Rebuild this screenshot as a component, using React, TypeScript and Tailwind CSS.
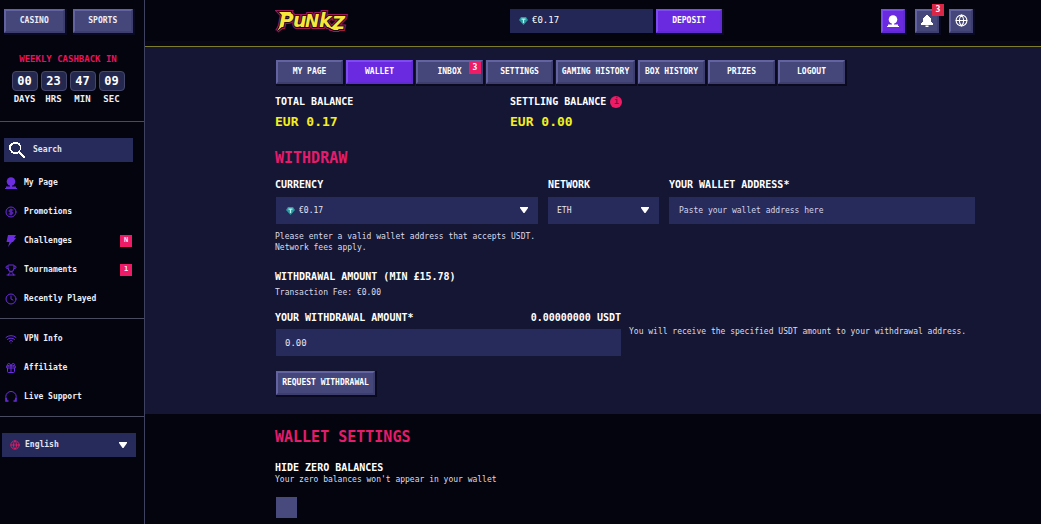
import React from "react";
import { CircleDollarSign, Clock, Gift, Globe, Trophy, Wifi } from "lucide-react";

const display = "font-bold";
const bevel =
  "border-2 border-t-[#6263a0] border-l-[#6263a0] border-r-[#3d3e6e] border-b-[#3d3e6e] bg-[#45477a] shadow-[1px_1px_0_1px_#090920]";
const bevelPurple =
  "border-2 border-t-[#7d4cf0] border-l-[#7d4cf0] border-r-[#5f2bd0] border-b-[#5f2bd0] bg-[#6a2be0] shadow-[1px_1px_0_1px_#090920]";
const field = "block w-full bg-[#272b5c] text-[#e4e4f2] outline-none appearance-none rounded-none";

const UserIcon = ({ className }: { className?: string }) => (
  <svg viewBox="0 0 12 12" className={className} fill="currentColor">
    <circle cx="6" cy="4.500" r="4.300" />
    <path d="M5 8h2v1.500h4V11h1v1H0v-1h1V9.500h4z" />
  </svg>
);

const BoltIcon = ({ className }: { className?: string }) => (
  <svg viewBox="0 0 12 12" className={className} fill="currentColor">
    <path d="M3 0h8L9 3h2L8 7H7l-4 5 1.500-5H1.500z" />
  </svg>
);

const HeadsetIcon = ({ className }: { className?: string }) => (
  <svg viewBox="0 0 12 12" className={className} fill="none" stroke="currentColor">
    <path d="M2 9A5.200 5.200 0 1 1 10 9" />
    <path d="M1 7v3h2.500M11 7v3H8.500" strokeWidth="1.500" />
  </svg>
);

const SearchIcon = ({ className }: { className?: string }) => (
  <svg viewBox="0 0 16 16" className={className} fill="currentColor">
    <path d="M4 0h5v1h2v2h1v5h-1v2h1v1h1v1h1v1h1v1h1v2h-2v-1h-1v-1h-1v-1h-1v-1h-1v-1H9v1H4v-1H2V9H1V8H0V3h1V2h1V1h2zM4 2v1H3v1H2v4h1v1h1v1h5V9h1V8h1V4h-1V3H9V2z" />
  </svg>
);

const BellIcon = ({ className }: { className?: string }) => (
  <svg viewBox="0 0 12 12" className={className} fill="currentColor">
    <path d="M5 0h2v1h1v1h1v1h1v4h1v1h1v2H0V8h1V7h1V3h1V2h1V1h1zM4.500 10.500h3V12h-3z" />
  </svg>
);

const Gem = ({ className }: { className?: string }) => (
  <svg viewBox="0 0 9 8" className={className}>
    <path d="M2 0h5l2 3-4.500 5L0 3z" fill="#2b9aa0" />
    <path d="M2.500 1.500h4v1.200H5.100V6H3.900V2.700H2.500z" fill="#b9f5f0" />
  </svg>
);

const Caret = ({ className }: { className?: string }) => (
  <svg viewBox="0 0 8 6" className={className} fill="#fff">
    <path d="M0 0h8v1L4.500 6h-1L0 1z" />
  </svg>
);

const Logo = () => (
  <svg viewBox="0 0 76 26" className="h-[26px] w-[76px]" role="img" aria-label="Punkz">
    <g
      fontFamily="'DejaVu Sans', sans-serif"
      fontStyle="italic"
      fontWeight="700"
      strokeLinejoin="miter"
      strokeMiterlimit="3"
    >
      {[
        { stroke: "#9c1a5c", width: 4 },
        { stroke: "#1c0618", width: 2 },
        { stroke: "none", width: 0 },
      ].map((layer) => (
        <g key={layer.width} stroke={layer.stroke} strokeWidth={layer.width} fill="#f7e63c">
          <path d="M4 4h12l-1 3H7zM7 15l-5 8 6-5 1-3zM53 19h12l-2 3h-4z" />
          <text y="19">
            <tspan x="4" fontSize="20">P</tspan>
            <tspan x="18" fontSize="19">u</tspan>
            <tspan x="30" fontSize="17">N</tspan>
            <tspan x="44" fontSize="19">k</tspan>
            <tspan x="57" y="21" fontSize="18">Z</tspan>
          </text>
        </g>
      ))}
    </g>
  </svg>
);

const timer = [
  { value: "00", label: "DAYS" },
  { value: "23", label: "HRS" },
  { value: "47", label: "MIN" },
  { value: "09", label: "SEC" },
];

const mainLinks = [
  { label: "My Page", icon: UserIcon },
  { label: "Promotions", icon: CircleDollarSign },
  { label: "Challenges", icon: BoltIcon, badge: "N" },
  { label: "Tournaments", icon: Trophy, badge: "1" },
  { label: "Recently Played", icon: Clock },
];

const helpLinks = [
  { label: "VPN Info", icon: Wifi },
  { label: "Affiliate", icon: Gift },
  { label: "Live Support", icon: HeadsetIcon },
];

const tabs = [
  { label: "MY PAGE" },
  { label: "WALLET", active: true },
  { label: "INBOX", badge: "3" },
  { label: "SETTINGS" },
  { label: "GAMING HISTORY", wide: true },
  { label: "BOX HISTORY" },
  { label: "PRIZES" },
  { label: "LOGOUT" },
];

type NavItem = { label: string; icon: React.ElementType; badge?: string };

const NavList = ({ items }: { items: NavItem[] }) => (
  <ul>
    {items.map(({ label, icon: Icon, badge }) => (
      <li key={label}>
        <a href="#" className="flex h-[29px] items-center pl-[5px] pr-3 text-[8px] font-bold">
          <Icon className="h-3 w-3 text-[#6c2de0]" />
          <span className="ml-[7px] flex-1">{label}</span>
          {badge && (
            <span className="flex h-3 w-3 items-center justify-center bg-[#ee1c67] text-[7px]">
              {badge}
            </span>
          )}
        </a>
      </li>
    ))}
  </ul>
);

const Sidebar = () => (
  <aside className="w-[145px] shrink-0 border-r border-[#3f4160] text-[#eeeef6]">
    <div className="flex gap-2 pt-[9px] pl-1 pr-[11px]">
      <button className={`${display} ${bevel} h-6 flex-1 text-[8px]`}>CASINO</button>
      <button className={`${display} ${bevel} h-6 flex-1 text-[8px]`}>SPORTS</button>
    </div>
    <div className="border-b border-[#4a4b5e] pt-5 pr-2 pb-4 text-center">
      <p className={`${display} text-[9px] leading-3 text-[#e8135f]`}>WEEKLY CASHBACK IN</p>
      <div className="mt-[6px] flex justify-center gap-[3px]">
        {timer.map((part) => (
          <div key={part.label} className="w-[26px]">
            <div className={`${display} h-5 rounded-sm border border-[#45476c] bg-[#25284e] text-[12px] leading-[18px] text-white`}>
              {part.value}
            </div>
            <p className={`${display} mt-[2px] text-[9px] leading-3`}>{part.label}</p>
          </div>
        ))}
      </div>
    </div>
    <div className="border-b border-[#4a4b5e] pt-4 pb-[5px]">
      <label className="mb-[6px] ml-1 mr-[11px] flex h-6 items-center bg-[#272b5c] pl-[5px]">
        <SearchIcon className="h-4 w-4 shrink-0 text-white" />
        <input
          type="search"
          aria-label="Search"
          placeholder="Search"
          className="ml-2 w-full text-[8px] font-bold outline-none placeholder:text-[#e4e4f2]"
        />
      </label>
      <NavList items={mainLinks} />
    </div>
    <div className="border-b border-[#4a4b5e] py-[5px]">
      <NavList items={helpLinks} />
    </div>
    <div className="relative mt-4 ml-[2px] mr-2">
      <Globe className="absolute top-[7px] left-2 h-[10px] w-[10px] text-[#ee1c67]" />
      <select aria-label="Language" className={`${field} h-6 pl-[23px] text-[8px] font-bold`}>
        <option>English</option>
      </select>
      <Caret className="pointer-events-none absolute top-[9px] right-[9px] h-[6px] w-2" />
    </div>
  </aside>
);

const Header = () => (
  <header className="border-b border-[#7d7d2c]">
    <div className="flex h-[46px] items-center justify-between border-b-[5px] border-[#080716] pr-[68px] pl-[130px]">
      <a href="#">
        <Logo />
      </a>
      <div className="flex items-center gap-[3px]">
        <div className="flex h-6 w-[143px] items-center gap-1 bg-[#232755] pl-[9px] text-[9px] text-white">
          <Gem className="h-2 w-[9px]" />
          <span>€0.17</span>
        </div>
        <button className={`${display} ${bevelPurple} h-6 w-[66px] text-[8px] text-white`}>DEPOSIT</button>
      </div>
      <div className="flex gap-[10px] text-white">
        <button aria-label="My page" className={`${bevelPurple} flex h-6 w-6 items-center justify-center`}>
          <UserIcon className="h-3 w-3" />
        </button>
        <button aria-label="Notifications" className={`${bevel} relative flex h-6 w-6 items-center justify-center`}>
          <BellIcon className="h-3 w-3" />
          <span className={`${display} absolute -top-[7px] -right-[7px] flex h-3 w-3 items-center justify-center bg-[#da2747] text-[8px]`}>
            3
          </span>
        </button>
        <button aria-label="Language" className={`${bevel} flex h-6 w-6 items-center justify-center`}>
          <Globe className="h-[13px] w-[13px]" />
        </button>
      </div>
    </div>
  </header>
);

const Tabs = () => (
  <nav className="flex gap-[3px] pl-px">
    {tabs.map((tab) => (
      <button
        key={tab.label}
        className={`${display} ${tab.active ? bevelPurple : bevel} ${
          tab.wide ? "w-[79px]" : "w-[67px]"
        } relative h-6 text-[8px] whitespace-nowrap text-white`}
      >
        {tab.label}
        {tab.badge && (
          <span className="absolute top-0 right-0 flex h-3 w-3 items-center justify-center bg-[#ee1c67]">
            {tab.badge}
          </span>
        )}
      </button>
    ))}
  </nav>
);

const label = `${display} block text-[10px] leading-3 text-white`;
const heading = `${display} text-[15px] leading-5 text-[#e51c6b]`;
const amount = `${display} mt-[6px] text-[13px] leading-4 text-[#f5ee1e]`;

const Withdraw = () => (
  <section className="bg-[#151633] pt-[13px] pr-[66px] pb-[19px] pl-[130px]">
    <Tabs />
    <div className="mt-3 flex">
      <div className="w-[235px]">
        <p className={label}>TOTAL BALANCE</p>
        <p className={amount}>EUR 0.17</p>
      </div>
      <div>
        <div className="flex items-center gap-1">
          <p className={label}>SETTLING BALANCE</p>
          <span className={`${display} flex h-3 w-3 items-center justify-center rounded-full bg-[#ee1c67] text-[8px] text-[#7a0f3c]`}>
            i
          </span>
        </div>
        <p className={amount}>EUR 0.00</p>
      </div>
    </div>

    <h2 className={`${heading} mt-[18px]`}>WITHDRAW</h2>
    <form>
      <div className="mt-[11px] grid grid-cols-[263fr_111fr_306fr] gap-[10px]">
        <div>
          <label htmlFor="currency" className={label}>CURRENCY</label>
          <div className="relative mt-[6px] ml-px">
            <Gem className="absolute top-[10px] left-[10px] h-2 w-[9px]" />
            <select id="currency" className={`${field} h-[27px] pl-[23px] text-[8px]`}>
              <option>€0.17</option>
            </select>
            <Caret className="pointer-events-none absolute top-[10px] right-[10px] h-[6px] w-2" />
          </div>
        </div>
        <div>
          <label htmlFor="network" className={label}>NETWORK</label>
          <div className="relative mt-[6px]">
            <select id="network" className={`${field} h-[27px] pl-[9px] text-[8px]`}>
              <option>ETH</option>
            </select>
            <Caret className="pointer-events-none absolute top-[10px] right-[10px] h-[6px] w-2" />
          </div>
        </div>
        <div>
          <label htmlFor="address" className={label}>YOUR WALLET ADDRESS*</label>
          <input
            id="address"
            placeholder="Paste your wallet address here"
            className={`${field} mt-[6px] h-[27px] px-[10px] text-[8px] placeholder:text-[#d4d5ea]`}
          />
        </div>
      </div>
      <p className="mt-[7px] text-[8px] leading-[11px]">
        Please enter a valid wallet address that accepts USDT.
        <br />
        Network fees apply.
      </p>

      <h3 className={`${label} mt-[18px]`}>WITHDRAWAL AMOUNT (MIN £15.78)</h3>
      <p className="mt-1 text-[8px] leading-3">Transaction Fee: €0.00</p>

      <div className="mt-[13px] grid grid-cols-2 gap-2">
        <div>
          <div className="flex justify-between">
            <label htmlFor="amount" className={label}>YOUR WITHDRAWAL AMOUNT*</label>
            <span className={label}>0.00000000 USDT</span>
          </div>
          <div className="mt-[5px] pl-px">
            <input
              id="amount"
              defaultValue="0.00"
              className={`${field} h-[27px] px-[9px] text-[9px]`}
            />
          </div>
        </div>
        <p className="self-center pb-1 text-[8px] leading-3 whitespace-nowrap">
          You will receive the specified USDT amount to your withdrawal address.
        </p>
      </div>
      <button
        type="button"
        className={`${display} ${bevel} mt-[15px] ml-px h-6 w-[99px] text-[8px] whitespace-nowrap text-white`}
      >
        REQUEST WITHDRAWAL
      </button>
    </form>
  </section>
);

const WalletSettings = () => (
  <section className="pt-[13px] pr-[66px] pl-[130px]">
    <h2 className={heading}>WALLET SETTINGS</h2>
    <label htmlFor="hide-zero" className={`${label} mt-[15px]`}>HIDE ZERO BALANCES</label>
    <p className="text-[8px] leading-3">Your zero balances won't appear in your wallet</p>
    <input
      id="hide-zero"
      type="checkbox"
      className="mt-[11px] ml-px block h-[21px] w-[21px] appearance-none bg-[#484a7d] checked:bg-[#6a2be0]"
    />
  </section>
);

export default function App() {
  return (
    <div className="flex min-h-screen bg-[#04040f] font-['DejaVu_Sans_Mono',monospace] text-[#dcdcec]">
      <Sidebar />
      <main className="min-w-0 flex-1">
        <Header />
        <Withdraw />
        <WalletSettings />
      </main>
    </div>
  );
}
